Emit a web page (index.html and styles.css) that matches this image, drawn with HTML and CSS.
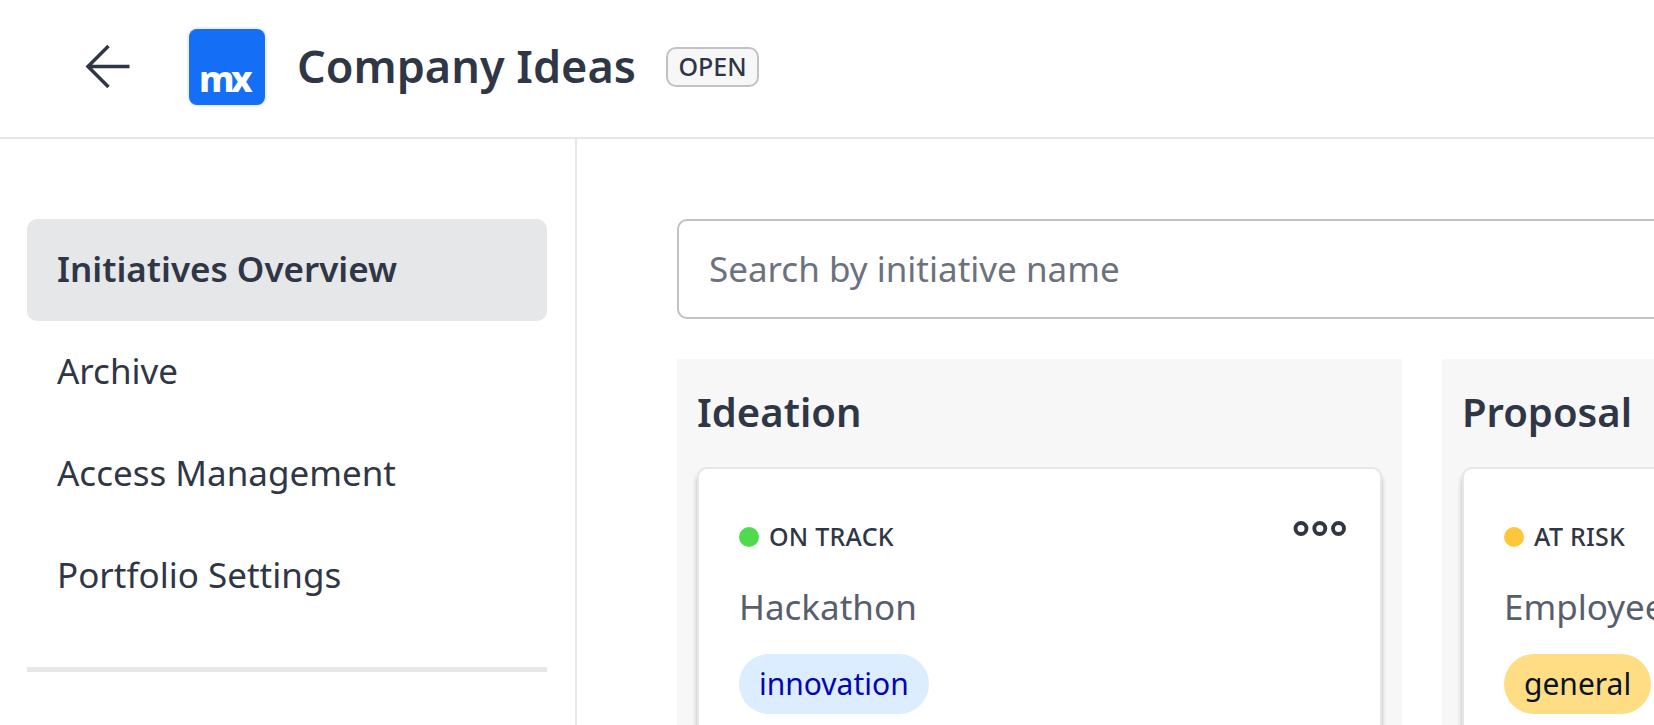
FILE: index.html
```
<!DOCTYPE html>
<html lang="en">
<head>
<meta charset="utf-8">
<title>Company Ideas</title>
<link rel="stylesheet" href="styles.css">
</head>
<body>
<div class="app">
  <header class="header">
    <svg class="back" width="46" height="46" viewBox="0 0 46 46" fill="none" stroke="#2f3646" stroke-width="3.5"><path d="M23.5 3 3 23.5l20.5 20.5M3.5 23.5H44.5"/></svg>
    <div class="logo"><span class="logo-text">mx</span></div>
    <h1 class="title">Company Ideas</h1>
    <span class="badge">OPEN</span>
  </header>
  <div class="body">
    <aside class="sidebar">
      <nav class="nav">
        <a class="nav-item active">Initiatives Overview</a>
        <a class="nav-item">Archive</a>
        <a class="nav-item">Access Management</a>
        <a class="nav-item">Portfolio Settings</a>
      </nav>
      <div class="divider"></div>
    </aside>
    <main class="main">
      <input class="search" type="text" placeholder="Search by initiative name">
      <div class="board">
        <section class="column">
          <h2 class="column-title">Ideation</h2>
          <article class="card">
            <div class="status-row">
              <span class="status"><i class="dot green"></i><span class="status-text">ON TRACK</span></span>
              <svg class="more" width="54" height="16" viewBox="0 0 54 16" fill="none" stroke="#2f3646" stroke-width="3.9"><circle cx="8" cy="7.5" r="5.5"/><circle cx="26.8" cy="7.5" r="5.5"/><circle cx="45.5" cy="7.5" r="5.5"/></svg>
            </div>
            <div class="name">Hackathon</div>
            <span class="tag blue">innovation</span>
          </article>
        </section>
        <section class="column">
          <h2 class="column-title">Proposal</h2>
          <article class="card">
            <div class="status-row">
              <span class="status"><i class="dot amber"></i><span class="status-text">AT RISK</span></span>
            </div>
            <div class="name">Employee</div>
            <span class="tag yellow">general</span>
          </article>
        </section>
      </div>
    </main>
  </div>
</div>
</body>
</html>
```
FILE: styles.css
```
* { box-sizing: border-box; }
body {
  margin: 0;
  background: #fff;
  color: #2f3646;
  font-family: "Noto Sans", sans-serif;
  overflow: hidden;
}
.app { display: flex; flex-direction: column; height: 725px; overflow: hidden; }
.header {
  display: flex;
  align-items: center;
  flex: none;
  height: 139px;
  padding: 0 0 5px 85px;
  border-bottom: 2px solid #e6e7e8;
}
.back { flex: none; }
.logo {
  flex: none;
  display: flex;
  align-items: flex-end;
  width: 76px;
  height: 76px;
  margin: 2px 0 0 58px;
  padding: 0 0 2px 10px;
  border-radius: 8px;
  background: #146ff6;
  box-shadow: 0 0 0 2px #f0f0f1;
}
.logo-text {
  color: #fff;
  font-size: 36px;
  font-weight: 800;
  line-height: 48px;
  letter-spacing: -3.5px;
}
.title { margin: 0 0 0 32px; font-size: 45px; font-weight: 600; line-height: 60px; white-space: nowrap; }
.badge {
  height: 40px;
  margin: 2px 0 0 30px;
  padding: 0 10.5px;
  border: 2px solid #c1c1c8;
  border-radius: 10px;
  background: #f7f7f7;
  font-size: 25px;
  font-weight: 500;
  line-height: 35px;
}
.body { display: flex; flex: 1; min-height: 0; }
.sidebar { flex: none; width: 577px; padding: 80px 28px 0 27px; border-right: 2px solid #e6e7e8; }
.nav { display: flex; flex-direction: column; }
.nav-item { height: 102px; padding-left: 30px; border-radius: 10px; font-size: 35px; line-height: 99px; white-space: nowrap; }
.nav-item.active { background: #e6e7e9; font-weight: 600; }
.divider { height: 5px; margin-top: 40px; background: #e6e7e9; }
.main { flex: 1; min-width: 0; padding: 80px 0 0 100px; overflow: hidden; }
.search {
  display: block;
  width: 1490px;
  height: 100px;
  padding: 0 30px 2px;
  border: 2px solid #c1c1c8;
  border-radius: 10px;
  background: #fff;
  color: #2f3646;
  font: 35px "Noto Sans", sans-serif;
}
.search::placeholder { color: #6c717e; opacity: 1; }
.board { display: flex; gap: 40px; margin-top: 40px; }
.column { flex: none; width: 725px; height: 500px; padding: 28px 20px 0; background: #f7f7f7; }
.column-title { margin: 0; font-size: 40px; font-weight: 600; line-height: 50px; }
.card {
  height: 420px;
  margin-top: 30px;
  padding: 40px 30px 0 40px;
  border: 2px solid #e6e7e8;
  border-radius: 10px;
  background: #fff;
  box-shadow: 0 5px 5px rgba(0, 0, 0, 0.26);
}
.status-row { display: flex; justify-content: space-between; align-items: flex-start; height: 60px; }
.status { display: flex; align-items: center; gap: 10px; height: 56px; font-size: 25px; font-weight: 500; white-space: nowrap; }
.status-text { padding-bottom: 2px; letter-spacing: 0.25px; }
.dot { width: 20px; height: 20px; border-radius: 50%; }
.green { background: #50db4f; }
.amber { background: #fec63c; }
.more { margin: 12px 3px 0 0; }
.name { margin-top: 13px; color: #575e6c; font-size: 35px; line-height: 50px; }
.tag { display: inline-block; height: 60px; margin-top: 22px; padding: 0 20px; border-radius: 30px; font-size: 30px; line-height: 59px; }
.blue { background: #dcedff; color: #0505b0; }
.yellow { background: #ffdd84; color: #0a1326; }
```
